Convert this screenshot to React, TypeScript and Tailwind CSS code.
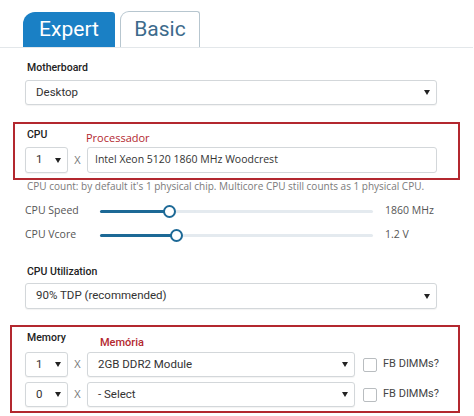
import React from "react";

const Caret = () => (
  <svg width="6" height="5" viewBox="0 0 6 5" className="shrink-0">
    <path d="M0 0h6L3 5z" fill="#222" />
  </svg>
);

const Select = ({ value, className }: { value: string; className: string }) => (
  <div
    className={`flex items-center justify-between h-full border border-[#d3d7da] rounded-[3px] bg-white shadow-[0_1px_1px_rgba(0,0,0,0.05)] pl-[10px] pr-[6px] text-[11.5px] text-[#333] ${className}`}
  >
    <span>{value}</span>
    <Caret />
  </div>
);

const Times = () => (
  <div className="w-[19px] flex items-center justify-center text-[11px] text-[#777] font-['Open_Sans',sans-serif]">
    X
  </div>
);

const Slider = ({ pos, label, value }: { pos: number; label: string; value: string }) => (
  <div className="flex items-center h-[14px] pl-[25px] font-['Open_Sans',sans-serif] text-[10.5px] text-[#555]">
    <div className="w-[75px]">{label}</div>
    <div className="relative w-[273px] h-[3px] bg-[#e4eaef] rounded-full">
      <div className="absolute left-0 top-0 h-full bg-[#1d6996] rounded-full" style={{ width: pos }} />
      <div
        className="absolute top-[-5px] w-[13px] h-[13px] rounded-full bg-white border-2 border-[#1d6996]"
        style={{ left: pos - 6 }}
      />
    </div>
    <div className="ml-[12px]">{value}</div>
  </div>
);

const MemRow = ({ count, module }: { count: string; module: string }) => (
  <div className="flex items-center h-[25px]">
    <Select value={count} className="w-[43px]" />
    <Times />
    <Select value={module} className="w-[268px]" />
    <div className="ml-[8px] w-[14px] h-[14px] border border-[#b9bdc0] rounded-[2px] bg-white" />
    <div className="ml-[6px] text-[11px] text-[#444]">FB DIMMs?</div>
  </div>
);

export default function App() {
  return (
    <div className="w-[474px] h-[416px] overflow-hidden bg-white font-['Roboto',sans-serif] text-[#333]">
      {/* tabs */}
      <div className="flex items-end gap-[5px] pl-[23px] pt-[11px] mr-[1px] border-b border-[#e3e7ea]">
        <div className="w-[92px] h-[35px] bg-[#1a80c5] rounded-tl-[12px] rounded-tr-[3px] text-white text-[21px] flex items-center justify-center">
          Expert
        </div>
        <div className="w-[80px] h-[36px] border border-b-0 border-[#b7c6cf] rounded-tl-[9px] rounded-tr-[3px] text-[#3d6b8c] text-[21px] flex items-center justify-center">
          Basic
        </div>
      </div>

      {/* motherboard */}
      <div className="mt-[13px] pl-[27px] text-[10.5px] font-medium leading-[14px] text-[#222]">Motherboard</div>
      <div className="mt-[5px] ml-[25px] h-[25px]">
        <Select value="Desktop" className="w-[412px]" />
      </div>

      {/* cpu */}
      <div className="mt-[17px] ml-[13px] w-[447px] h-[58px] border-2 border-[#b3282f] pl-[10px] pt-[4px]">
        <div className="flex items-start h-[19px]">
          <div className="w-[61px] pl-[2px] text-[10.5px] font-medium leading-[14px] text-[#222]">CPU</div>
          <div className="pt-[3px] text-[11px] leading-[14px] text-[#b3282f] font-['Open_Sans',sans-serif]">
            Processador
          </div>
        </div>
        <div className="flex h-[26px]">
          <Select value="1" className="w-[43px]" />
          <Times />
          <div className="w-[350px] h-full flex items-center border border-[#d3d7da] rounded-[3px] px-[7px] text-[10.5px] text-[#333] font-['Open_Sans',sans-serif]">
            Intel Xeon 5120 1860 MHz Woodcrest
          </div>
        </div>
      </div>
      <div className="pl-[27px] text-[10px] leading-[12px] text-[#7a7a7a] font-['Open_Sans',sans-serif] whitespace-nowrap">
        CPU count: by default it's 1 physical chip. Multicore CPU still counts as 1 physical CPU.
      </div>

      {/* sliders */}
      <div className="mt-[12px]">
        <Slider pos={69} label="CPU Speed" value="1860 MHz" />
      </div>
      <div className="mt-[10px]">
        <Slider pos={76} label="CPU Vcore" value="1.2 V" />
      </div>

      {/* utilization */}
      <div className="mt-[23px] pl-[27px] text-[10.5px] font-medium leading-[14px] text-[#222]">CPU Utilization</div>
      <div className="mt-[4px] ml-[25px] h-[26px]">
        <Select value="90% TDP (recommended)" className="w-[412px]" />
      </div>

      {/* memory */}
      <div className="mt-[16px] ml-[10px] w-[450px] h-[88px] border-2 border-[#b3282f] pl-[13px] pt-[4px]">
        <div className="flex items-start h-[21px]">
          <div className="w-[75px] pl-[2px] text-[10.5px] font-medium leading-[14px] text-[#222]">Memory</div>
          <div className="pt-[5px] text-[11px] leading-[14px] text-[#b3282f] font-medium">Memória</div>
        </div>
        <div className="flex flex-col gap-[5px]">
          <MemRow count="1" module="2GB DDR2 Module" />
          <MemRow count="0" module="- Select" />
        </div>
      </div>
    </div>
  );
}
